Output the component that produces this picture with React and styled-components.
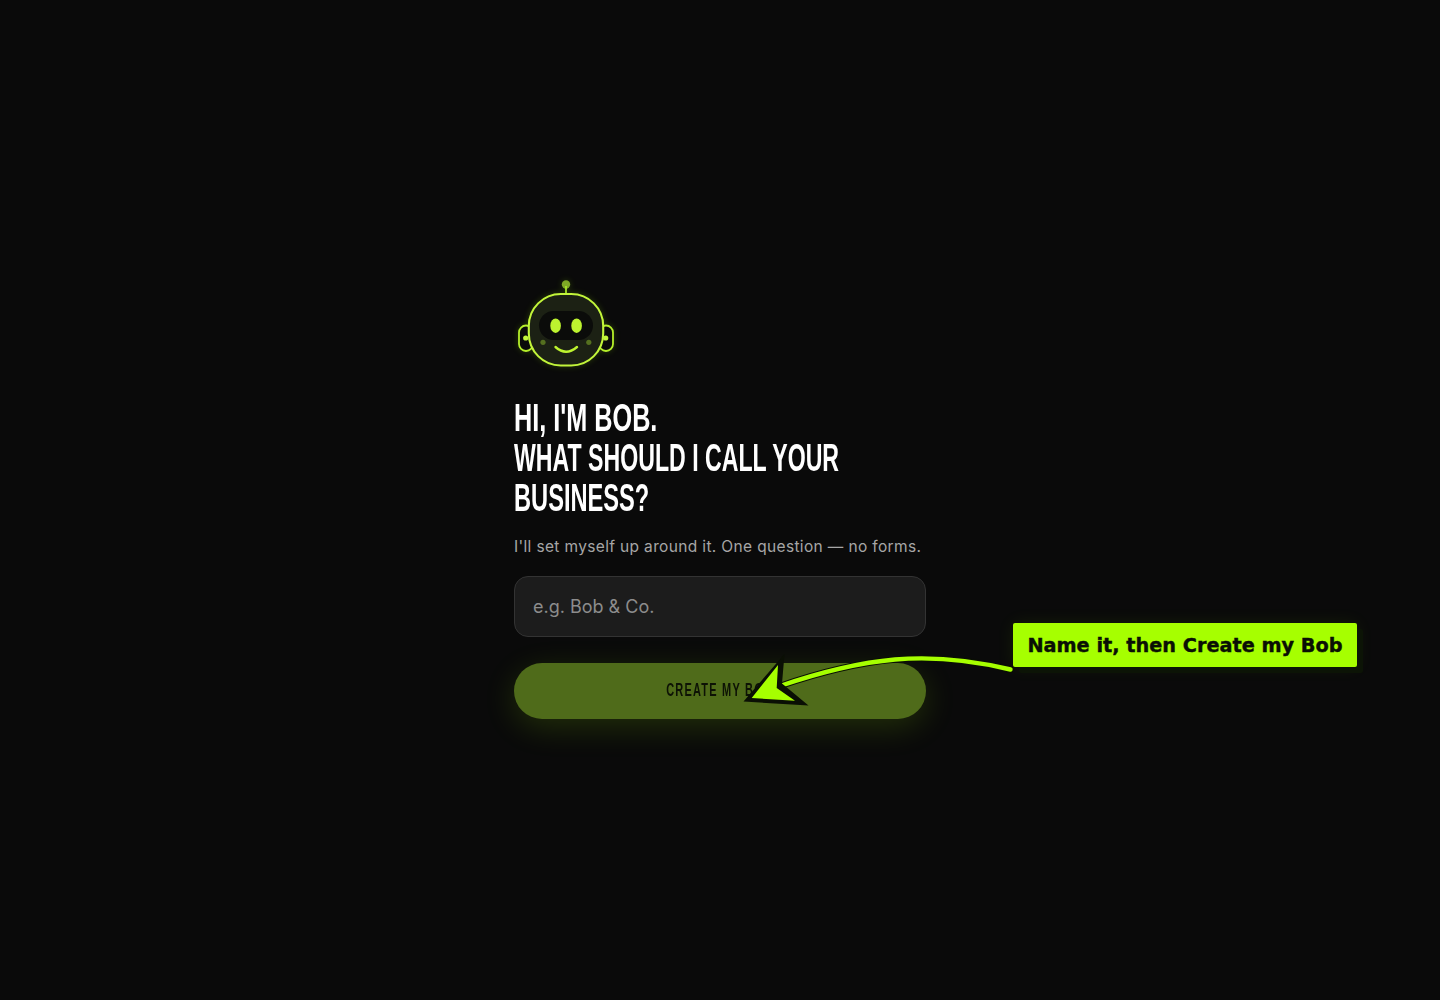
import React from "react";
import styled, { createGlobalStyle } from "styled-components";

const GlobalStyle = createGlobalStyle`
  html, body {
    margin: 0;
    padding: 0;
    background: #0a0a0a;
  }
  * {
    box-sizing: border-box;
  }
`;

function BobLogo() {
  return (
    <LogoSvg viewBox="514 276 104 96" aria-hidden="true">
      <circle cx="566" cy="284.5" r="4.2" fill="#7fa826" />
      <line x1="566" y1="286" x2="566" y2="294" stroke="#a6e22a" strokeWidth="1.8" />
      <rect x="519" y="325.5" width="14" height="25.5" rx="7" fill="#0a0a0a" stroke="#b5ef2a" strokeWidth="1.8" />
      <rect x="599" y="325.5" width="14" height="25.5" rx="7" fill="#0a0a0a" stroke="#b5ef2a" strokeWidth="1.8" />
      <circle cx="525.7" cy="338" r="2.6" fill="#c2f53a" />
      <circle cx="605.7" cy="338" r="2.6" fill="#c2f53a" />
      <rect x="528.8" y="294" width="74.4" height="71.5" rx="32" fill="#1c2114" stroke="#c2f53a" strokeWidth="2.1" />
      <rect x="539" y="311" width="54" height="29" rx="14.5" fill="#0b0c0a" />
      <ellipse cx="555.6" cy="325.7" rx="5.3" ry="7.2" fill="#bdf32f" />
      <ellipse cx="576.6" cy="325.7" rx="5.3" ry="7.2" fill="#bdf32f" />
      <circle cx="543" cy="342.3" r="2.6" fill="#55701f" />
      <circle cx="588.8" cy="342.3" r="2.6" fill="#55701f" />
      <path d="M555.5 347 Q566 356.5 577 347" fill="none" stroke="#bdf32f" strokeWidth="2.4" strokeLinecap="round" />
    </LogoSvg>
  );
}

function CalloutArrow() {
  const tail = "M1010.5 669.5 C975 661 935 656 895 659.5 C855 663 815 674 780 686";
  return (
    <ArrowSvg viewBox="730 645 290 70" aria-hidden="true">
      <path d={tail} fill="none" stroke="#0a0f04" strokeWidth="6.5" strokeLinecap="round" />
      <path d={tail} fill="none" stroke="#a6ff00" strokeWidth="4.4" strokeLinecap="round" />
      <polygon points="743.5 701.5 784.5 654 782 683.5 808.5 705.5" fill="#0a0f04" />
      <polygon points="751.7 698 778 665 776.7 688 795 700.7" fill="#a6ff00" />
    </ArrowSvg>
  );
}

export default function App() {
  return (
    <>
      <GlobalStyle />
      <Page>
        <Panel>
          <BobLogo />
          <Heading>
            <HeadingLine $squeeze={0.647}>Hi, I'm Bob.</HeadingLine>
            <HeadingLine $squeeze={0.593}>What should I call your</HeadingLine>
            <HeadingLine $squeeze={0.606}>business?</HeadingLine>
          </Heading>
          <Subtitle>I'll set myself up around it. One question — no forms.</Subtitle>
          <NameInput type="text" placeholder="e.g. Bob & Co." />
          <CreateButton type="button" disabled>
            <ButtonLabel>Create my Bob</ButtonLabel>
          </CreateButton>
        </Panel>
        <CalloutArrow />
        <Callout>Name it, then Create my Bob</Callout>
      </Page>
    </>
  );
}

const Page = styled.div`
  position: relative;
  min-height: 100vh;
  display: flex;
  align-items: center;
  justify-content: center;
  background: #0a0a0a;
  overflow: hidden;
`;

const Panel = styled.div`
  width: 412px;
  padding-bottom: 5px;
  display: flex;
  flex-direction: column;
`;

const LogoSvg = styled.svg`
  width: 104px;
  height: 96px;
  margin-bottom: 26px;
  filter: drop-shadow(0 0 3px rgba(166, 255, 0, 0.2));
`;

const Heading = styled.h1`
  margin: 0 0 16px;
  font-family: "Liberation Sans", Arial, sans-serif;
  font-size: 39px;
  font-weight: 700;
  line-height: 40px;
  white-space: nowrap;
  text-transform: uppercase;
  color: #ffffff;
`;

/* no condensed face is installed, so squeeze the bold sans line by line */
const HeadingLine = styled.span`
  display: block;
  transform: scaleX(${(p) => p.$squeeze});
  transform-origin: left center;
`;

const Subtitle = styled.p`
  margin: 0 0 16px;
  font-family: Inter, sans-serif;
  font-size: 15.5px;
  letter-spacing: 0.35px;
  line-height: 26px;
  color: #a6a6a6;
`;

const NameInput = styled.input`
  width: 100%;
  height: 61px;
  padding: 0 18px;
  margin-bottom: 26px;
  background: #1c1c1c;
  border: 1px solid #333333;
  border-radius: 14px;
  font-family: Inter, sans-serif;
  font-size: 18px;
  color: #ffffff;
  outline: none;

  &::placeholder {
    color: #8c8c8c;
    opacity: 1;
  }
`;

const CreateButton = styled.button`
  width: 100%;
  height: 56px;
  padding: 0 0 2px;
  border: none;
  border-radius: 28px;
  background: #4f6b1a;
  box-shadow: 0 8px 32px rgba(166, 255, 0, 0.15);
`;

const ButtonLabel = styled.span`
  display: inline-block;
  font-family: "Liberation Sans", Arial, sans-serif;
  font-size: 18px;
  font-weight: 700;
  letter-spacing: 2px;
  text-transform: uppercase;
  color: #0d1205;
  transform: scaleX(0.61);
`;

const ArrowSvg = styled.svg`
  position: absolute;
  left: 730px;
  top: 645px;
  width: 290px;
  height: 70px;
`;

const Callout = styled.div`
  position: absolute;
  left: 1013px;
  top: 623px;
  width: 344px;
  height: 44px;
  padding-top: 1px;
  display: flex;
  align-items: center;
  justify-content: center;
  background: #a6ff00;
  border-radius: 2px;
  box-shadow: 6px 6px 0 #0c1406, 0 0 18px rgba(166, 255, 0, 0.08);
  font-family: "DejaVu Sans", sans-serif;
  font-size: 19.3px;
  font-weight: 700;
  white-space: nowrap;
  color: #0a0f04;
  -webkit-text-stroke: 0.4px #0a0f04;
`;
